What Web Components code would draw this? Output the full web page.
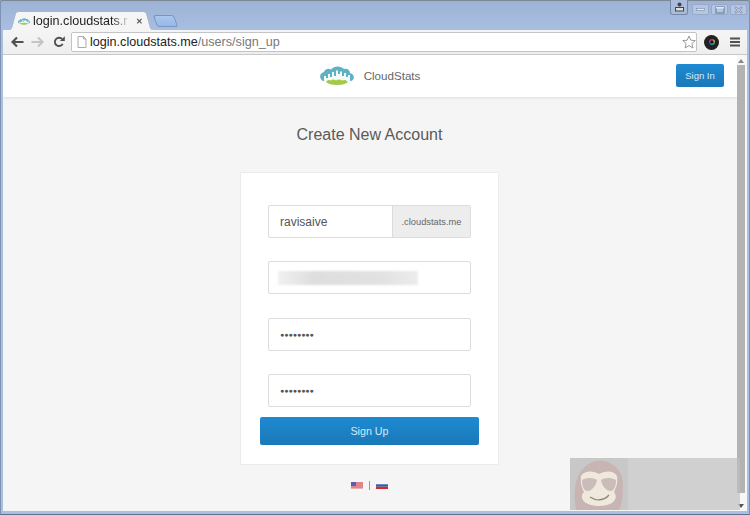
<!DOCTYPE html>
<html lang="en">
<head>
<meta charset="UTF-8">
<title>CloudStats</title>
<style>
    html, body { margin: 0; padding: 0; background: #8fa3c4; }
    body { font-family: "Liberation Sans", Arial, sans-serif; overflow: hidden; }
</style>
<script>
    const cloudLogo = (w, h) => `
    <svg width="${w}" height="${h}" viewBox="0 0 34 19" style="display:block;flex:none">
        <path d="M3 15C-1 13 -1 7 4 6C5 3 9 2 11 3.500C14 -.5 21 -.5 24 3C27 2 30 4 30 7C35 8 35 14 31 15Z" fill="#5fb2c4"/>
        <path d="M4 15V10H6V12H8V8H10V11H12V6H14V10H16V4.500H18V8H20V5.500H22V10H24V7H26V11H28V9H30V15Z" fill="#f6faf8"/>
        <path d="M6 16C8 13.500 9 14 11 14.500C12 13 14 13 16 14.500C18 13 20 13 22 14.500C24 13.500 26 13.500 28 16C26 18 22 19 17 19C12 19 8 18 6 16Z" fill="#a3c94a"/>
    </svg>`;

    class BrowserChrome extends HTMLElement {
        constructor() {
            super();
            this.attachShadow({ mode: 'open' });
            this.shadowRoot.innerHTML = `
            <style>
                :host {
                display: flex;
                flex-direction: column;
                box-sizing: border-box;
                position: relative;
                width: 750px;
                height: 515px;
                padding: 0 2px 3px;
                background: linear-gradient(#9db3d6, #a9bfe2 30px, #a9bfe2);
                border: 1px solid #7f91b0;
                border-top-color: #7d8794;
                border-bottom-color: #5f6f8f;
                border-radius: 3px 3px 0 0;
                }
                .strip {
                display: flex;
                align-items: flex-end;
                height: 29px;
                flex: none;
                padding-left: 7px;
                position: relative;
                }
                .tabwrap { filter: drop-shadow(0 0 .5px #66788f); flex: none; }
                .tab {
                display: flex;
                align-items: center;
                gap: 3px;
                box-sizing: border-box;
                width: 142px;
                height: 18px;
                padding: 0 0 0 8px;
                background: #f5f5f5;
                clip-path: polygon(0 100%, 2px 16px, 6px 1px, 8px 0, 134px 0, 136px 1px, 140px 16px, 142px 100%);
                font-size: 12.600px;
                color: #222;
                white-space: nowrap;
                }
                .tab .name {
                width: 97px;
                -webkit-mask-image: linear-gradient(to right, #000 82%, transparent);
                mask-image: linear-gradient(to right, #000 82%, transparent);
                }
                .tab .close { font-size: 8px; font-weight: bold; color: #555; margin-left: 3px; }
                .newtab {
                width: 19px;
                height: 10px;
                margin: 0 0 3px 3px;
                background: linear-gradient(#a9c7f0, #95b8ea);
                border: 1px solid #7b94bd;
                border-radius: 3px 3px 2px 2px;
                transform: skewX(20deg);
                }
                .winbtns {
                position: absolute;
                top: 3px;
                right: 0;
                display: flex;
                gap: 2px;
                }
                .winbtns span {
                display: flex;
                align-items: center;
                justify-content: center;
                box-sizing: border-box;
                width: 17px;
                height: 11px;
                background: #b4c6e3;
                border: 1px solid #98aac8;
                border-radius: 2px;
                }
                .winbtns .user {
                width: 18px;
                height: 15px;
                margin: -4px 2px 0 0;
                background: #a9bcdc;
                border-color: #7588a8;
                border-top: 0;
                border-radius: 0 0 3px 3px;
                }
                ::slotted([slot="page"]) { flex: 1; min-width: 0; }
                .content { display: flex; flex: 1; min-height: 0; }
                .bar {
                display: flex;
                flex-direction: column;
                flex: none;
                box-sizing: border-box;
                width: 10px;
                padding: 4px 2px 3px 0;
                background: #f7f7f7;
                align-items: center;
                }
                .bar i {
                display: block;
                width: 0;
                height: 0;
                border: 3px solid transparent;
                border-top: 0;
                border-bottom: 4px solid #888;
                }
                .bar i.down { border-bottom: 0; border-top: 4px solid #555; }
                .bar b { display: block; flex: 1; width: 8px; margin: 2px 0 11px; background: #b3b3b3; }
            </style>
            <div class="strip">
                <div class="tabwrap"><div class="tab">
                    ${cloudLogo(12, 9)}
                    <span class="name">login.cloudstats.r</span>
                    <span class="close">&#10005;</span>
                </div></div>
                <div class="newtab"></div>
                <div class="winbtns">
                    <span class="user"><svg width="9" height="10" viewBox="0 0 9 10"><circle cx="4.500" cy="2.500" r="2" fill="#444"/><rect x=".5" y="5.500" width="8" height="3.500" fill="#ddd" stroke="#444"/></svg></span>
                    <span><svg width="9" height="5" viewBox="0 0 9 5"><rect x=".5" y="1.500" width="8" height="2" fill="#e4eaf4" stroke="#7c8ca6" stroke-width=".6"/></svg></span>
                    <span><svg width="10" height="8" viewBox="0 0 10 8"><rect x="1" y="1" width="8" height="6" fill="none" stroke="#7c8ca6" stroke-width="1.400"/><rect x="1" y="1" width="8" height="1.500" fill="#dfe6f2"/></svg></span>
                    <span><svg width="9" height="8" viewBox="0 0 9 8"><path d="M1 1L8 7M8 1L1 7" stroke="#7c8ca6" stroke-width="2"/><path d="M1.500 1.500L7.500 6.500M7.500 1.500L1.500 6.500" stroke="#e4eaf4" stroke-width=".8"/></svg></span>
                </div>
            </div>
            <slot name="toolbar"></slot>
            <div class="content">
                <slot name="page"></slot>
                <div class="bar"><i></i><b></b><i class="down"></i></div>
            </div>
            <slot name="overlay"></slot>
            `;
        }
    }

    class BrowserToolbar extends HTMLElement {
        constructor() {
            super();
            this.attachShadow({ mode: 'open' });
            this.shadowRoot.innerHTML = `
            <style>
                :host {
                display: flex;
                align-items: center;
                box-sizing: border-box;
                height: 25px;
                flex: none;
                padding: 0 7px 0 8px;
                background: linear-gradient(#f5f5f5, #eeeeee);
                border-bottom: 1px solid #c9c9c9;
                }
                svg { display: block; flex: none; }
                .nav { display: flex; align-items: center; gap: 7px; margin-right: 6px; }
                .nav .reload { margin-left: 2px; }
                .url {
                display: flex;
                align-items: center;
                flex: 1;
                box-sizing: border-box;
                height: 20px;
                padding: 0 0 0 5px;
                background: #fff;
                border: 1px solid #c4c4c4;
                border-radius: 2px;
                font-size: 12.600px;
                color: #222;
                white-space: nowrap;
                }
                .url .path { color: #777; }
                .url .text { flex: 1; margin-left: 3px; }
                .ext { display: flex; align-items: center; gap: 11px; margin-left: 7px; }
                .ball {
                display: flex;
                align-items: center;
                justify-content: center;
                width: 15px;
                height: 15px;
                border-radius: 50%;
                background: #222;
                }
                .ball::after {
                content: "";
                width: 6px;
                height: 6px;
                border-radius: 50%;
                background: radial-gradient(circle, #111 0 1.200px, transparent 1.800px), conic-gradient(#c33, #bb3, #3a4, #2ab, #44b, #b3a, #c33);
                }
            </style>
            <div class="nav">
                <svg width="13" height="12" viewBox="0 0 13 12"><path d="M6 1.500L1.500 6L6 10.500M2 6H12.500" fill="none" stroke="#505050" stroke-width="2.200"/></svg>
                <svg width="13" height="12" viewBox="0 0 13 12"><path d="M7 1.500L11.500 6L7 10.500M11 6H.5" fill="none" stroke="#c4c4c4" stroke-width="2.200"/></svg>
                <svg class="reload" width="12" height="12" viewBox="0 0 13 13"><path d="M10.500 8.500A4.500 4.500 0 1 1 10 3.500" fill="none" stroke="#505050" stroke-width="2"/><path d="M7.500 5.500H12.800V.2Z" fill="#505050"/></svg>
            </div>
            <div class="url">
                <svg width="10" height="12" viewBox="0 0 10 12"><path d="M1 .500H6.500L9 3V11.500H1Z M6.500 .500V3H9" fill="#fff" stroke="#aaa"/></svg>
                <span class="text"><slot></slot><span class="path"><slot name="path"></slot></span></span>
                <svg width="14" height="14" viewBox="0 0 14 14"><path d="M7 1L8.800 5.200L13.300 5.600L9.900 8.500L10.900 13L7 10.600L3.100 13L4.100 8.500L.700 5.600L5.200 5.200Z" fill="#fff" stroke="#999"/></svg>
            </div>
            <div class="ext">
                <div class="ball"></div>
                <svg width="10" height="10" viewBox="0 0 10 10"><path d="M0 1.500H10M0 5H10M0 8.500H10" stroke="#505050" stroke-width="2"/></svg>
            </div>
            `;
        }
    }

    class SiteHeader extends HTMLElement {
        constructor() {
            super();
            this.attachShadow({ mode: 'open' });
            this.shadowRoot.innerHTML = `
            <style>
                :host {
                display: grid;
                grid-template-columns: 1fr auto 1fr;
                align-items: center;
                box-sizing: border-box;
                height: 43px;
                padding: 0 13px 1px;
                background: #fff;
                border-bottom: 1px solid #e6e6e6;
                box-shadow: 0 1px 2px rgba(0,0,0,.05);
                }
                .brand {
                grid-column: 2;
                display: flex;
                align-items: center;
                gap: 10px;
                font-size: 11.600px;
                color: #666;
                }
                .end { display: flex; justify-content: flex-end; }
            </style>
            <div class="brand">${cloudLogo(34, 19)}<span><slot name="brand"></slot></span></div>
            <div class="end"><slot name="action"></slot></div>
            `;
        }
    }

    class BlueButton extends HTMLElement {
        constructor() {
            super();
            this.attachShadow({ mode: 'open' });
            this.shadowRoot.innerHTML = `
            <style>
                :host {
                display: flex;
                align-items: center;
                justify-content: center;
                box-sizing: border-box;
                height: var(--btn-height, 23px);
                width: var(--btn-width, 48px);
                background: linear-gradient(#1e8ad2, #1a79b8);
                border-radius: 2px;
                font-size: var(--btn-size, 9.500px);
                color: #d8ebf8;
                }
            </style>
            <slot></slot>
            `;
        }
    }

    class FormField extends HTMLElement {
        constructor() {
            super();
            this.attachShadow({ mode: 'open' });
            this.shadowRoot.innerHTML = `
            <style>
                :host {
                display: flex;
                box-sizing: border-box;
                height: 33px;
                width: 203px;
                background: #fff;
                border: 1px solid #dcdcdc;
                border-radius: 2px;
                font-size: 12px;
                color: #555;
                }
                .value {
                flex: 1;
                display: flex;
                align-items: center;
                padding-left: 11px;
                min-width: 0;
                }
                .addon {
                display: flex;
                align-items: center;
                justify-content: center;
                width: 77px;
                background: #ededed;
                border-left: 1px solid #dcdcdc;
                font-size: 9.300px;
                color: #666;
                }
                :host(:not([addon])) .addon { display: none; }
            </style>
            <div class="value"><slot></slot></div>
            <div class="addon"><slot name="addon"></slot></div>
            `;
        }
    }

    class SignupCard extends HTMLElement {
        constructor() {
            super();
            this.attachShadow({ mode: 'open' });
            this.shadowRoot.innerHTML = `
            <style>
                :host {
                display: flex;
                flex-direction: column;
                align-items: center;
                box-sizing: border-box;
                width: 259px;
                height: 293px;
                padding: 32px 0 0;
                background: #fff;
                border: 1px solid #ebebeb;
                }
                .fields { display: flex; flex-direction: column; gap: 23.330px; margin-bottom: 10px; }
            </style>
            <div class="fields"><slot></slot></div>
            <slot name="submit"></slot>
            `;
        }
    }

    class LangFlags extends HTMLElement {
        constructor() {
            super();
            this.attachShadow({ mode: 'open' });
            this.shadowRoot.innerHTML = `
            <style>
                :host { display: flex; align-items: center; gap: 6px; }
                svg { display: block; filter: blur(.3px); }
                i { display: block; width: 1px; height: 9px; background: #999; }
            </style>
            <svg width="12" height="7" viewBox="0 0 12 7"><rect width="12" height="7" fill="#e7b0b4"/><path d="M0 1H12M0 3H12M0 5H12" stroke="#c9565f" stroke-width=".9"/><rect width="5" height="4" fill="#5a5fa8"/></svg>
            <i></i>
            <svg width="12" height="7" viewBox="0 0 12 7"><rect width="12" height="2.300" fill="#f4f6fa"/><rect y="2.300" width="12" height="2.400" fill="#2560b8"/><rect y="4.700" width="12" height="2.300" fill="#d12b30"/></svg>
            `;
        }
    }

    class SignupPage extends HTMLElement {
        constructor() {
            super();
            this.attachShadow({ mode: 'open' });
            this.shadowRoot.innerHTML = `
            <style>
                :host {
                display: flex;
                flex-direction: column;
                background: #f5f5f5;
                min-height: 0;
                overflow: hidden;
                }
                main { display: flex; flex-direction: column; align-items: center; flex: 1; padding-right: 1px; }
                h1 {
                margin: 26px 0 26px;
                font-size: 16px;
                line-height: 22px;
                font-weight: normal;
                color: #5a5a5a;
                }
                .foot { margin-top: 16px; }
            </style>
            <slot name="header"></slot>
            <main>
                <h1><slot name="title"></slot></h1>
                <slot name="card"></slot>
                <div class="foot"><slot name="foot"></slot></div>
            </main>
            `;
        }
    }

    class WatermarkBadge extends HTMLElement {
        constructor() {
            super();
            this.attachShadow({ mode: 'open' });
            this.shadowRoot.innerHTML = `
            <style>
                :host {
                position: absolute;
                left: 569px;
                top: 457px;
                width: 170px;
                height: 52px;
                background: rgba(190,190,190,.68);
                overflow: hidden;
                }
                svg { display: block; }
            </style>
            <svg width="60" height="52" viewBox="0 0 60 52">
                <rect width="58" height="52" fill="#b0b0b0" opacity=".25"/>
                <path d="M6 52C2 30 6 8 26 3C42 1 53 12 53 28C53 38 52 46 49 52Z" fill="#c9adad" opacity=".75"/>
                <path d="M11 18C15 12 24 13 29 16C35 13 43 12 47 18C48 26 46 30 44 34C47 38 46 42 42 45C35 49 23 49 16 45C11 42 11 37 14 34C12 30 10 25 11 18Z" fill="#efe9dd"/>
                <path d="M12 22C18 19 24 20 27 22C26 28 22 33 17 33C13 32 12 27 12 22ZM46 22C40 19 34 20 31 22C32 28 36 33 41 33C45 32 46 27 46 22Z" fill="#cabcb8"/>
                <path d="M20 39C26 43 34 43 39 37" fill="none" stroke="#8f8a72" stroke-width="1.300"/>
            </svg>
            `;
        }
    }

    customElements.define('browser-chrome', BrowserChrome);
    customElements.define('browser-toolbar', BrowserToolbar);
    customElements.define('site-header', SiteHeader);
    customElements.define('blue-button', BlueButton);
    customElements.define('form-field', FormField);
    customElements.define('signup-card', SignupCard);
    customElements.define('lang-flags', LangFlags);
    customElements.define('signup-page', SignupPage);
    customElements.define('watermark-badge', WatermarkBadge);
</script>
</head>
<body>
    <browser-chrome>
        <browser-toolbar slot="toolbar">login.cloudstats.me<span slot="path">/users/sign_up</span></browser-toolbar>
        <signup-page slot="page">
            <site-header slot="header">
                <span slot="brand">CloudStats</span>
                <blue-button slot="action">Sign In</blue-button>
            </site-header>
            <span slot="title">Create New Account</span>
            <signup-card slot="card">
                <form-field addon>ravisaive<span slot="addon">.cloudstats.me</span></form-field>
                <form-field><div style="width:140px;height:14px;margin-left:-2px;background:linear-gradient(to right,#f1f1f1,#dedede 25%,#e2e2e2 75%,#ececec);filter:blur(1px)"></div></form-field>
                <form-field><span style="font-size:7px">&#9679;&#9679;&#9679;&#9679;&#9679;&#9679;&#9679;&#9679;</span></form-field>
                <form-field><span style="font-size:7px">&#9679;&#9679;&#9679;&#9679;&#9679;&#9679;&#9679;&#9679;</span></form-field>
                <blue-button slot="submit" style="--btn-width:219px;--btn-height:28px;--btn-size:10.700px">Sign Up</blue-button>
            </signup-card>
            <lang-flags slot="foot"></lang-flags>
        </signup-page>
        <watermark-badge slot="overlay"></watermark-badge>
    </browser-chrome>
</body>
</html>
